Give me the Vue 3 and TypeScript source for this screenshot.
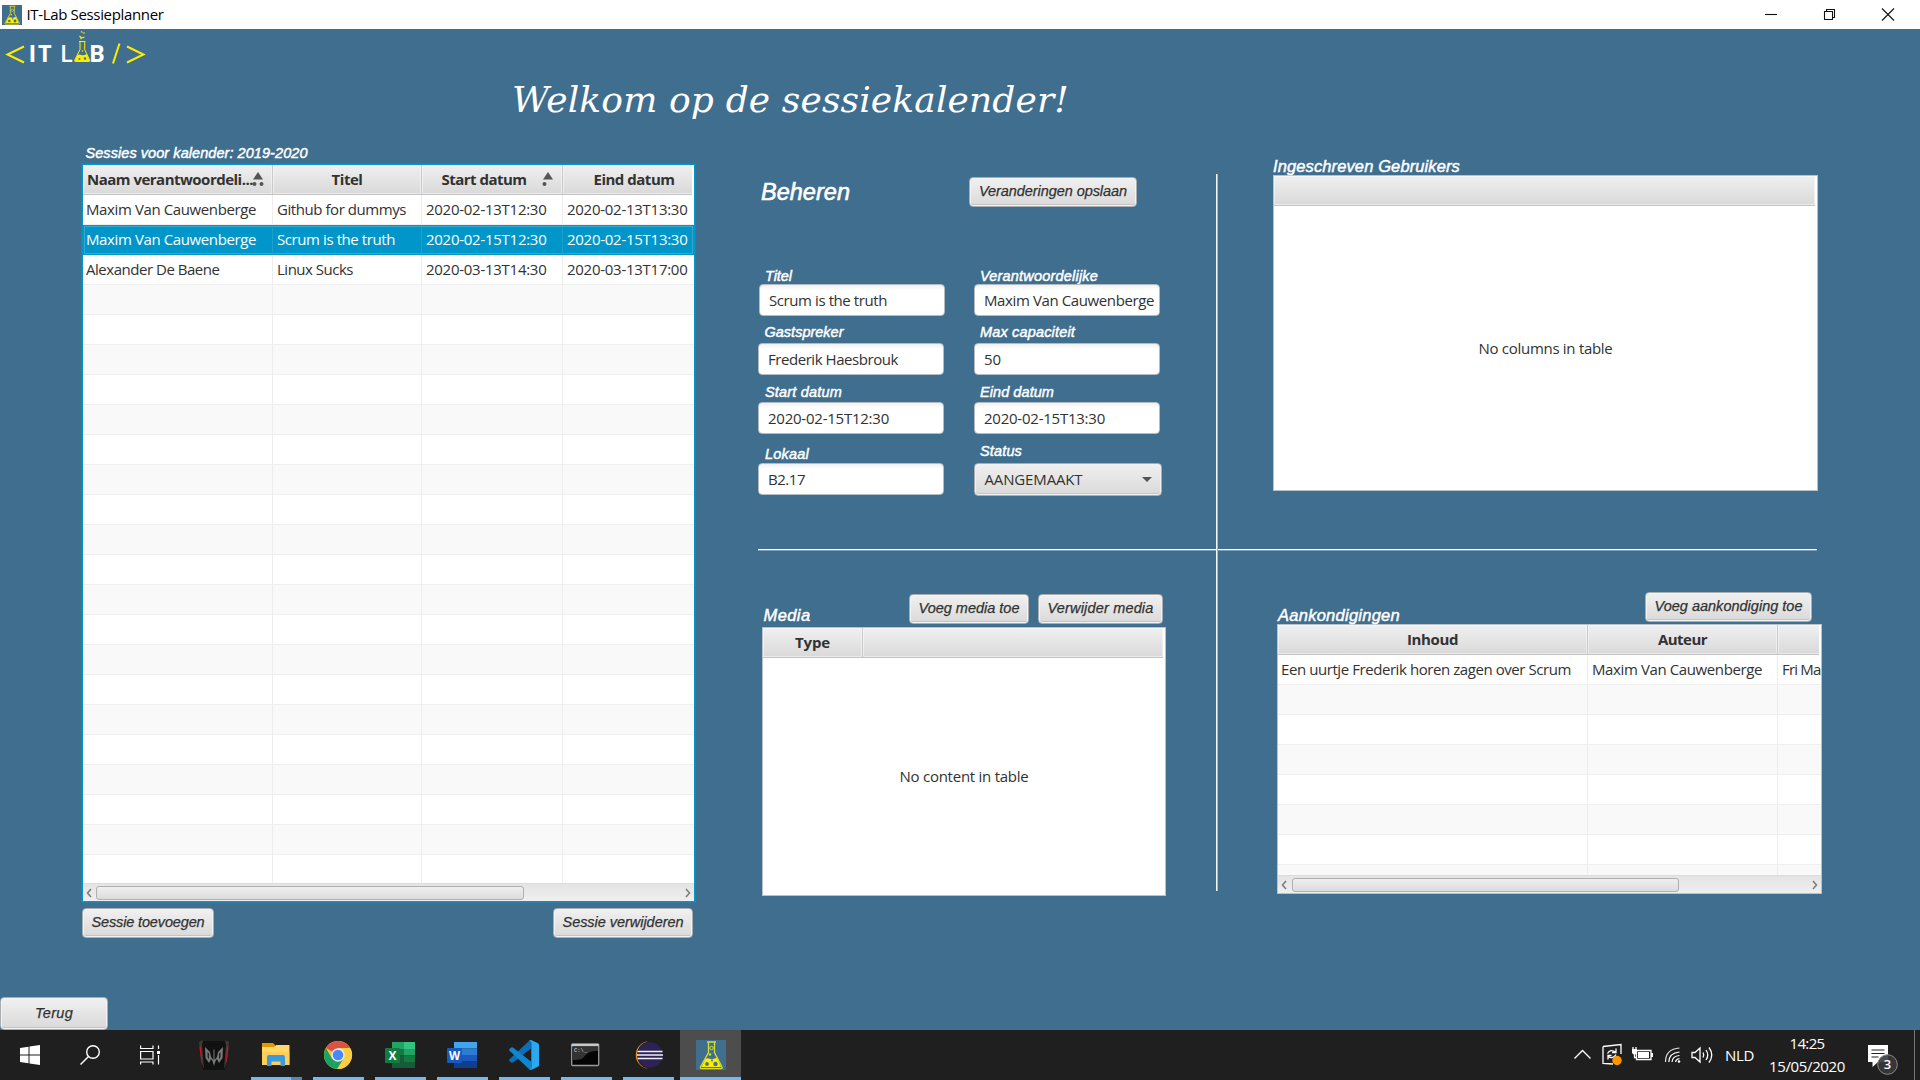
<script setup lang="ts">
import type { Directive } from 'vue'

interface Cell { text: string; width: number }
interface Column { title: string; width: number; titleWidth: number; sort?: number; shift?: number }

// Tracks a run of text out (or in) to the given advance width.
const vFit: Directive<HTMLElement, number> = {
  mounted(el, { value }) {
    const count = (el.textContent ?? '').length
    if (count < 2) return
    const natural = el.getBoundingClientRect().width
    el.style.letterSpacing = `${((value - natural) / count).toFixed(3)}px`
  },
}

const sessionColumns: Column[] = [
  { title: 'Naam verantwoordeli...', width: 190, titleWidth: 166, sort: 2, shift: -7.5 },
  { title: 'Titel', width: 149, titleWidth: 31 },
  { title: 'Start datum', width: 141, titleWidth: 85, sort: 1, shift: -8 },
  { title: 'Eind datum', width: 132, titleWidth: 81, shift: 5 },
]
const sessions: Cell[][] = [
  [{ text: 'Maxim Van Cauwenberge', width: 170 }, { text: 'Github for dummys', width: 129 }, { text: '2020-02-13T12:30', width: 120.5 }, { text: '2020-02-13T13:30', width: 120.5 }],
  [{ text: 'Maxim Van Cauwenberge', width: 170 }, { text: 'Scrum is the truth', width: 118 }, { text: '2020-02-15T12:30', width: 120.5 }, { text: '2020-02-15T13:30', width: 120.5 }],
  [{ text: 'Alexander De Baene', width: 133.5 }, { text: 'Linux Sucks', width: 76 }, { text: '2020-03-13T14:30', width: 120.5 }, { text: '2020-03-13T17:00', width: 120.5 }],
]
const emptySessionRows = 20

const noticeColumns: Column[] = [
  { title: 'Inhoud', width: 310, titleWidth: 51 },
  { title: 'Auteur', width: 190, titleWidth: 49 },
  { title: '', width: 43, titleWidth: 0 },
]
const notice: Cell[] = [
  { text: 'Een uurtje Frederik horen zagen over Scrum', width: 290 },
  { text: 'Maxim Van Cauwenberge', width: 170 },
  { text: 'Fri Ma', width: 38.5 },
]

const tasks = ['predator', 'explorer', 'chrome', 'excel', 'word', 'vscode', 'cmd', 'eclipse', 'lab']
</script>

<template>
  <div class="screen">
    <svg class="defs" width="0" height="0">
      <defs>
        <symbol id="flask" viewBox="0 0 30 30">
          <rect width="30" height="30" fill="#406e8f" />
          <path d="M11 2h9M12.500 2.500v10L4.500 27c-.4 1 .2 1.700 1 1.700h19.500c1 0 1.500-.8 1-1.700L18.500 12.500v-10" fill="none" stroke="#d2df35" stroke-width="1.300" />
          <path d="M9.500 19c3-2 5 1 7.500 0s3-1 4-1l4 9H5.500z" fill="#ffed00" />
          <circle cx="15.500" cy="8" r="1.700" fill="none" stroke="#d2df35" /><circle cx="14" cy="14.500" r="1.200" fill="#d2df35" />
          <circle cx="11" cy="24" r="1.900" fill="#4c7481" /><circle cx="19.500" cy="24" r="2.200" fill="#4c7481" /><circle cx="16" cy="20.500" r="1" fill="#4c7481" />
        </symbol>
      </defs>
    </svg>

    <header class="titlebar">
      <svg class="app-icon" width="20" height="20"><use href="#flask" /></svg>
      <span v-fit="137" class="t">IT-Lab Sessieplanner</span>
      <svg class="window-buttons" width="174" height="29" viewBox="0 0 174 29" fill="none" stroke="#111" stroke-width="1.100">
        <path d="M19 14.500h12" />
        <path d="M78.500 11.500h8v8h-8zM80.500 11.500v-2h8v8h-2" />
        <path d="M136 8.500l12 12M148 8.500l-12 12" />
      </svg>
    </header>

    <main class="app">
      <svg class="logo" width="150" height="40" viewBox="0 29 150 40">
        <g fill="none" stroke="#ffed00" stroke-width="2">
          <path d="M24 46.500L7.500 54.500L24 62.500M127 46.500l16.500 8-16.500 8M119.500 43.500L113 63.500" />
          <path d="M79 41.500h6.500M80 42v7.500L74.800 60q-.5 1.500 1 1.500h13q1.500 0 .8-1.500L84.700 49.500V42" stroke-width="1" />
          <path d="M81 31.500l1.500 1M83.500 33.500l1-1M79.500 36l2 2 3-1M80.500 39l1-.5" stroke-width="1.200" />
        </g>
        <path d="M77.500 55q2-1 4 0t5-1l3.500 7.500H74.500z" fill="#ffed00" />
        <circle cx="79.500" cy="59" r="1" fill="#406e8f" /><circle cx="85" cy="58.500" r="1.200" fill="#406e8f" />
        <circle cx="82.500" cy="51" r=".8" fill="#ffed00" />
        <g fill="#fff" font-family="Open Sans, sans-serif" font-weight="700" font-size="23.500">
          <text x="28.500" y="62" textLength="23">IT</text><text x="60" y="62" font-weight="600">L</text><text x="89" y="62">B</text>
        </g>
      </svg>
      <h1><span v-fit="557" class="t">Welkom op de sessiekalender!</span></h1>

      <div class="content">
        <section class="sessions">
          <div class="label caption"><span v-fit="222" class="t">Sessies voor kalender: 2019-2020</span></div>
          <div class="table focused">
            <div class="thead">
              <div v-for="c in sessionColumns" :key="c.title" class="th" :style="{ width: c.width + 'px' }">
                <span v-fit="c.titleWidth" class="t" :style="{ marginLeft: (c.shift ?? 0) * 2 + 'px' }">{{ c.title }}</span>
                <svg v-if="c.sort" class="sort" width="12" height="14" viewBox="0 0 12 14" fill="#555">
                  <path d="M6 0l5 7.500H1z" /><circle cx="2.500" cy="12" r="2" /><circle v-if="c.sort === 2" cx="9.500" cy="12" r="2" />
                </svg>
              </div>
            </div>
            <div class="tbody">
              <div v-for="(row, i) in sessions" :key="i" class="tr" :class="{ selected: i === 1 }">
                <div v-for="(cell, j) in row" :key="j" class="td" :style="{ width: sessionColumns[j].width + 'px' }">
                  <span v-fit="cell.width" class="t">{{ cell.text }}</span>
                </div>
              </div>
              <div v-for="n in emptySessionRows" :key="'e' + n" class="tr" :class="{ odd: n % 2 === 1 }">
                <div v-for="c in sessionColumns" :key="c.title" class="td" :style="{ width: c.width + 'px' }"></div>
              </div>
            </div>
            <div class="scrollbar">
              <svg width="6" height="10" viewBox="0 0 6 10"><path d="M5 1L1.500 5L5 9" /></svg>
              <div class="track"><div class="thumb wide"></div></div>
              <svg width="6" height="10" viewBox="0 0 6 10"><path d="M1 1L4.500 5L1 9" /></svg>
            </div>
          </div>
          <div class="actions">
            <button class="btn add"><span v-fit="113" class="t">Sessie toevoegen</span></button>
            <button class="btn remove"><span v-fit="121" class="t">Sessie verwijderen</span></button>
          </div>
        </section>

        <section class="details">
          <div class="upper">
            <div class="manage">
              <div class="manage-head">
                <h2><span v-fit="89" class="t">Beheren</span></h2>
                <button class="btn save"><span v-fit="148" class="t">Veranderingen opslaan</span></button>
              </div>
              <div class="form">
                <div class="col first">
                  <div class="label l1"><span v-fit="27" class="t">Titel</span></div>
                  <div class="field nudged"><span v-fit="118" class="t">Scrum is the truth</span></div>
                  <div class="label l2 back"><span v-fit="79" class="t">Gastspreker</span></div>
                  <div class="field"><span v-fit="130" class="t">Frederik Haesbrouk</span></div>
                  <div class="label l3"><span v-fit="77" class="t">Start datum</span></div>
                  <div class="field"><span v-fit="121" class="t">2020-02-15T12:30</span></div>
                  <div class="label l4"><span v-fit="44" class="t">Lokaal</span></div>
                  <div class="field"><span v-fit="37" class="t">B2.17</span></div>
                </div>
                <div class="col second">
                  <div class="label l1"><span v-fit="118" class="t">Verantwoordelijke</span></div>
                  <div class="field"><span v-fit="170" class="t">Maxim Van Cauwenberge</span></div>
                  <div class="label l2"><span v-fit="95" class="t">Max capaciteit</span></div>
                  <div class="field"><span v-fit="17" class="t">50</span></div>
                  <div class="label l3"><span v-fit="74" class="t">Eind datum</span></div>
                  <div class="field"><span v-fit="121" class="t">2020-02-15T13:30</span></div>
                  <div class="label l4 status"><span v-fit="42" class="t">Status</span></div>
                  <div class="combo">
                    <span v-fit="98" class="t">AANGEMAAKT</span>
                    <svg width="10" height="5" viewBox="0 0 10 5"><path d="M0 0h10L5 5z" fill="#555" /></svg>
                  </div>
                </div>
              </div>
            </div>
            <div class="users">
              <div class="label heading"><span v-fit="187" class="t">Ingeschreven Gebruikers</span></div>
              <div class="table plain">
                <div class="thead"><div class="th filler"></div></div>
                <div class="placeholder"><span v-fit="134" class="t">No columns in table</span></div>
              </div>
            </div>
          </div>
          <div class="rule"></div>
          <div class="lower">
            <div class="media">
              <div class="bar">
                <div class="label heading"><span v-fit="47" class="t">Media</span></div>
                <button class="btn m1"><span v-fit="101" class="t">Voeg media toe</span></button>
                <button class="btn m2"><span v-fit="106" class="t">Verwijder media</span></button>
              </div>
              <div class="table plain">
                <div class="thead">
                  <div class="th type"><span v-fit="35" class="t">Type</span></div>
                  <div class="th filler"></div>
                </div>
                <div class="placeholder"><span v-fit="129" class="t">No content in table</span></div>
              </div>
            </div>
            <div class="notices">
              <div class="bar">
                <div class="label heading"><span v-fit="122" class="t">Aankondigingen</span></div>
                <button class="btn n1"><span v-fit="148" class="t">Voeg aankondiging toe</span></button>
              </div>
              <div class="table">
                <div class="thead">
                  <div v-for="c in noticeColumns" :key="c.title" class="th" :style="{ width: c.width + 'px' }">
                    <span v-fit="c.titleWidth" class="t">{{ c.title }}</span>
                  </div>
                </div>
                <div class="tbody">
                  <div class="tr">
                    <div v-for="(cell, j) in notice" :key="j" class="td" :style="{ width: noticeColumns[j].width + 'px' }">
                      <span v-fit="cell.width" class="t">{{ cell.text }}</span>
                    </div>
                  </div>
                  <div v-for="n in 7" :key="n" class="tr" :class="{ odd: n % 2 === 1 }">
                    <div v-for="c in noticeColumns" :key="c.title" class="td" :style="{ width: c.width + 'px' }"></div>
                  </div>
                </div>
                <div class="scrollbar">
                  <svg width="6" height="10" viewBox="0 0 6 10"><path d="M5 1L1.500 5L5 9" /></svg>
                  <div class="track"><div class="thumb"></div></div>
                  <svg width="6" height="10" viewBox="0 0 6 10"><path d="M1 1L4.500 5L1 9" /></svg>
                </div>
              </div>
            </div>
          </div>
        </section>
      </div>

      <button class="btn back-btn"><span v-fit="38" class="t">Terug</span></button>
    </main>

    <footer class="taskbar">
      <div class="sys">
        <svg width="20" height="20" viewBox="0 0 20 20" fill="#fff"><path d="M0 3l8.500-1.200v7.700H0zM9.500 1.600L20 0v9.500H9.500zM0 10.500h8.500v7.800L0 17zM9.500 10.500H20V20L9.500 18.500z" /></svg>
      </div>
      <div class="sys">
        <svg width="20" height="20" viewBox="0 0 20 20" fill="none" stroke="#fff" stroke-width="1.400"><circle cx="13" cy="7" r="6.300" /><path d="M8.500 11.500L.5 19.500" /></svg>
      </div>
      <div class="sys">
        <svg width="20" height="20" viewBox="0 0 20 20" fill="none" stroke="#fff" stroke-width="1.200"><path d="M.6.500V3.500H13V.5M.6 6.500H13V14H.6zM.6 19.500V17H13v2.500M18.500 .5V4M18.500 10v9.500" /><path d="M17 6h3v3h-3z" fill="#fff" stroke="none" /></svg>
      </div>
      <div class="tasks">
        <div v-for="t in tasks" :key="t" class="task" :class="t">
          <svg width="30" height="30" viewBox="0 0 30 30">
            <g v-if="t === 'predator'">
              <path d="M4 1h22l2 10-2 19H4L1 11z" fill="#111" />
              <path d="M0 2l4-2-1 5 2 24-3-8zM30 2l-4-2 1 5-2 24 3-8z" fill="#3b3b3b" />
              <path d="M.5 6l1 10 2 10-1.500-19zM29.500 6l-1 10-2 10 1.500-19z" fill="#d0121b" />
              <path d="M6 7l5 5 1 5 2.500 3V10l.5-1 .5 1v10l2.500-3 1-5 5-5-.5 11-3.500 5-2-4-1.500 2-1.500 5-1.500-5-1.500-2-2 4-3.500-5z" fill="#77797b" />
              <path d="M8.500 12l1.500 1.500v6L8.500 17zM21.500 12L20 13.500v6l1.500-2.500z" fill="#222" />
            </g>
            <g v-else-if="t === 'explorer'">
              <path d="M1 3h11l2 2v4H1z" fill="#e09a00" /><path d="M1 7h12l2-2h13q.5 0 .5.500V25H1z" fill="#ffd76a" /><path d="M1 12h27.500v13H1z" fill="#fdc945" opacity=".55" />
              <path d="M6 26V17q0-2 2-2h14q2 0 2 2v9h-4.500v-4.500h-9V26z" fill="#3b99e0" />
            </g>
            <g v-else-if="t === 'chrome'">
              <circle cx="15" cy="15" r="14" fill="#fbc73b" />
              <path d="M15 15L2.900 8A14 14 0 0 1 27.100 8H15z" fill="#dd5144" /><path d="M2.900 8A14 14 0 0 0 15 29l6.100-10.500L15 15 9 18.500z" fill="#1ba261" />
              <path d="M27.100 8A14 14 0 0 1 14 29l7-11L15 8z" fill="#ffcd43" />
              <circle cx="15" cy="15" r="6.700" fill="#e6eefb" /><circle cx="15" cy="15" r="5.300" fill="#4a89f5" />
            </g>
            <g v-else-if="t === 'excel'">
              <path d="M7 2h12v7H7z" fill="#21a366" /><path d="M19 2h11v7H19z" fill="#33c481" /><path d="M7 9h12v6.500H7z" fill="#107c41" /><path d="M19 9h11v6.500H19z" fill="#21a366" />
              <path d="M7 15.500h23V28H7z" fill="#185c37" /><path d="M19 15.500h11V22H19z" fill="#107c41" /><rect y="8" width="15" height="15" rx="1" fill="#107c41" />
              <text x="7.500" y="19.700" text-anchor="middle" fill="#fff" font-family="Open Sans, sans-serif" font-weight="700" font-size="12">X</text>
            </g>
            <g v-else-if="t === 'word'">
              <path d="M7 2h23v6.500H7z" fill="#41a5ee" /><path d="M7 8.500h23V15H7z" fill="#2b7cd3" /><path d="M7 15h23v6.500H7z" fill="#185abd" /><path d="M7 21.500h23V28H7z" fill="#103f91" />
              <rect y="8" width="15" height="15" rx="1" fill="#185abd" />
              <text x="7.500" y="19.700" text-anchor="middle" fill="#fff" font-family="Open Sans, sans-serif" font-weight="700" font-size="11.500">W</text>
            </g>
            <g v-else-if="t === 'vscode'">
              <path d="M22 0v8.500L4 22.500q-1 .7-1.800 0L.5 21q-.9-1 0-1.800L20 1z" fill="#0a6fb8" />
              <path d="M22 30v-8.500L4 7.500q-1-.7-1.800 0L.5 9q-.9 1 0 1.800L20 29z" fill="#0f86cf" />
              <path d="M22 0l7 3.300q1 .6 1 1.700v20q0 1.200-1 1.700L22 30q-1.500 0-2-1 2 1 2.300-1V2.500Q22 .5 20 1q.7-1 2-1z" fill="#2aa8f2" />
            </g>
            <g v-else-if="t === 'cmd'">
              <rect x=".7" y="4" width="27" height="21.500" rx="1" fill="#050505" stroke="#9a9a9a" stroke-width="1.300" /><path d="M.7 4h27v2.300h-27z" fill="#c8c8c8" />
              <path d="M1.500 7h25.500v4q-10-1-15 7-3 2-10.500 2z" fill="#333" /><text x="3" y="11.800" fill="#ddd" font-family="Liberation Mono, monospace" font-size="5.500">C:\_</text>
            </g>
            <g v-else-if="t === 'eclipse'">
              <path d="M15 1.200A13.900 13.900 0 0 0 15 28.800Q4 26 4 15T15 1.200z" fill="#f7941e" /><circle cx="17" cy="15" r="12.700" fill="#2c2255" />
              <path d="M4.500 11.500h25M4 15h26M4.500 18.500h25" stroke="#f0eff6" stroke-width="1.700" />
            </g>
            <use v-else href="#flask" />
          </svg>
          <i v-if="t !== 'predator'"></i>
        </div>
      </div>
      <div class="tray">
        <svg width="146" height="30" viewBox="0 0 146 30" fill="none" stroke="#fff" stroke-width="1.300">
          <path d="M4.500 18.500L12.500 10.500L20.500 18.500" />
          <path d="M33 6.500L51 4.500V14M33 6.500V23.500L43 24" />
          <path d="M37.500 13.500q3-5 8-1.500M46 8.500v4h-4M46 14.500q-3 5-8 2M38 19.500v-4h3.500" />
          <circle cx="47" cy="20.500" r="4.700" fill="#ff9800" stroke="none" />
          <path d="M66.500 10.500h14.500v9H66.500z" /><path d="M68 12h11v6H68zM81 13h2v4h-2zM62 9h5v4q-2.500 3-5 0z" fill="#fff" stroke="none" /><path d="M63 7v3M66 7v3M64.500 13v4.500h2" />
          <g stroke-width="1.200"><path d="M95.500 22Q95.500 9 109.500 8" opacity=".85" /><path d="M98.800 22Q99 13 109.500 12M102 22q.5-6 7.500-6.500M105.500 22q.5-3 4-3.500" /></g><circle cx="109" cy="21.500" r="1.300" fill="#fff" stroke="none" />
          <path d="M122 12.500h3l5-4.500v14l-5-4.500h-3zM133 12.500q1.500 2.500 0 5M136 10q3.500 5 0 10M139 7.500q5.500 7.500 0 15" />
        </svg>
        <span v-fit="29" class="t lang">NLD</span>
        <div class="clock"><span v-fit="35" class="t">14:25</span><span v-fit="76" class="t">15/05/2020</span></div>
        <svg class="notify" width="36" height="34" viewBox="0 0 36 34">
          <path d="M3 3h20v17H13l-5.500 5v-5H3z" fill="#fff" /><path d="M6.500 8h13M6.500 11.500h13M6.500 15h7" stroke="#222" stroke-width="1.200" />
          <circle cx="22.500" cy="22.500" r="9.800" fill="#383838" fill-opacity=".9" stroke="#8b8b8b" />
          <text x="22.500" y="27" text-anchor="middle" fill="#fff" font-family="Open Sans, sans-serif" font-size="13" font-weight="600">3</text>
        </svg>
      </div>
    </footer>
  </div>
</template>

<style>
body { margin: 0; overflow: hidden; }
</style>

<style scoped>
.screen { width: 1920px; height: 1080px; display: flex; flex-direction: column; overflow: hidden; position: relative; font: 15px/20px "Open Sans", "Noto Sans", sans-serif; color: #323232; background: #406e8f; }
.screen * { box-sizing: border-box; }
.defs { position: absolute; }
.t { display: inline-block; white-space: pre; flex: none; }
svg { flex: none; display: block; }

.titlebar { height: 29px; background: #fff; display: flex; align-items: center; padding-left: 2px; color: #000; flex: none; }
.app-icon { margin-right: 4.500px; }
.titlebar .t { line-height: 29px; height: 29px; }
.window-buttons { margin-left: auto; }

.app { height: 1001px; flex: none; display: flex; flex-direction: column; align-items: flex-start; }
.logo { flex: none; }
h1 { margin: 0 0 0 512px; font: italic 400 36px/61px "DejaVu Serif", serif; color: #fff; height: 60px; }
.content { display: flex; height: 868px; width: 1920px; padding-left: 82px; }

.label { color: #fff; font: italic 400 14.500px/18px "Liberation Sans", sans-serif; -webkit-text-stroke: .45px currentColor; height: 18px; white-space: nowrap; }
.heading { font-size: 16.500px; }
.btn { font: italic 400 14.500px/20px "Liberation Sans", sans-serif; -webkit-text-stroke: .25px #323232; color: #323232; height: 30px; padding: 0 0 2px; border: 1px solid #a9adb0; border-radius: 4px; background: linear-gradient(#f1f1f1, #d9d9d9); box-shadow: inset 0 0 0 1px #f3f3f3, inset 0 -2px 0 #c4c4c4; display: flex; align-items: center; justify-content: center; flex: none; }

.sessions { width: 613px; padding-top: 15px; }
.caption { margin-left: 3.500px; height: 20px; line-height: 18px; }
.table { border: 1px solid #b9c2c8; background: #fff; display: flex; flex-direction: column; overflow: hidden; }
.focused { border: 1px solid #0096c9; height: 738px; box-shadow: 0 0 0 1px rgba(3, 158, 211, .35); }
.thead { display: flex; height: 30px; border-bottom: 1px solid #c4c4c4; background: linear-gradient(#f0f0f0, #d9d9d9); flex: none; margin-right: 2px; overflow: hidden; }
.th { font-weight: 700; display: flex; align-items: center; justify-content: center; border-right: 1px solid #cacaca; box-shadow: inset 0 0 0 1px rgba(255, 255, 255, .45); flex: none; position: relative; line-height: 26px; padding-bottom: 1px; }
.th:last-child { border-right: 0; }
.sort { position: absolute; right: 8px; top: 7px; }
.tbody { flex: 1; min-height: 0; overflow: hidden; }
.tr { display: flex; height: 30px; border-bottom: 1px solid #efefef; }
.tr.odd { background: #f9f9f9; }
.td { border-right: 1px solid #ededed; padding-left: 3px; line-height: 29px; flex: none; white-space: nowrap; }
.td:last-child { border-right: 0; }
.td + .td { padding-left: 4px; }
.tr.selected { background: #0096c9; color: #fff; border-bottom: 0; box-shadow: inset 0 0 0 1px #0096c9, inset 0 0 0 2px #34a9d1; }
.tr.selected .td { border-color: #1f9fcb; }
.scrollbar { height: 18px; flex: none; border-top: 1px solid #dcdcdc; background: linear-gradient(#e4e4e4, #efefef); display: flex; align-items: center; padding: 0 3px; gap: 5px; }
.scrollbar path { fill: none; stroke: #7a7a7a; stroke-width: 1.500; }
.track { flex: 1; }
.thumb { height: 14px; width: 387px; border: 1px solid #b0b0b0; border-radius: 3px; background: linear-gradient(#efefef, #dcdcdc); }
.thumb.wide { width: 428px; margin-left: -1px; }
.actions { display: flex; justify-content: space-between; margin-top: 6px; padding-right: 2px; }
.add { width: 132px; }
.remove { width: 140px; }

.details { margin-left: 63px; width: 1064px; position: relative; }
.details::after { content: ""; position: absolute; left: 458px; top: 45px; width: 2px; height: 717px; background: linear-gradient(90deg, #f4f6f8 50%, #a4b9c8 50%); }
.upper { display: flex; height: 420px; }
.rule { height: 2px; width: 1059px; background: linear-gradient(#fff 50%, #7f9db4 50%); }
.manage { width: 408px; }
.manage-head { display: flex; padding-top: 49px; height: 141px; justify-content: space-between; padding-right: 29px; }
h2 { margin: -3px 0 0 3px; color: #fff; font: italic 400 23.500px/34px "Liberation Sans", sans-serif; -webkit-text-stroke: .6px #fff; }
.save { width: 168px; margin-top: -1px; }
.form { display: flex; }
.col { display: flex; flex-direction: column; }
.second { margin-left: 30px; }
.first .label { padding-left: 7px; }
.first .label.back { padding-left: 6.500px; }
.second .label { padding-left: 6px; }
.l1 { height: 14px; line-height: 13px; }
.l2 { height: 27px; line-height: 33px; }
.l3 { height: 27px; line-height: 35px; }
.l4 { height: 29px; line-height: 41px; }
.l4.status { line-height: 34px; }
.field { width: 186px; height: 32px; border: 1px solid #b3bcc2; border-radius: 4px; background: linear-gradient(#f0f0f0, #fff 5px); padding-left: 9px; line-height: 30px; white-space: nowrap; }
.field.nudged { position: relative; left: 1px; }
.combo { width: 188px; height: 33px; border: 1px solid #a9adb0; border-radius: 4px; background: linear-gradient(#f0f0f0, #d9d9d9); box-shadow: inset 0 0 0 1px #f0f0f0, inset 0 -2px 0 #c8c8c8; display: flex; align-items: center; justify-content: space-between; padding: 0 9px 0 9.500px; line-height: 31px; }
.users { margin-left: 107px; width: 545px; padding-top: 28px; }
.users .heading { height: 19px; line-height: 19px; }
.users .table { height: 316px; margin-top: -1px; }
.filler { flex: 1; }
.placeholder { flex: 1; display: flex; align-items: center; justify-content: center; padding-bottom: 1px; }

.lower { display: flex; padding-top: 40px; }
.media { margin-left: 4px; width: 404px; }
.bar { display: flex; align-items: flex-start; }
.bar .heading { margin-left: 1px; padding-top: 14px; }
.media .bar { height: 36px; padding-top: 3px; padding-bottom: 0; }
.media .bar .heading { padding-top: 12px; width: 146px; margin-left: 1.500px; margin-right: -.5px; }
.m1 { width: 120px; }
.m2 { width: 125px; margin-left: 9px; }
.media .table { height: 269px; }
.type { width: 100px; }
.notices { margin-left: 111px; width: 545px; }
.notices .bar { height: 33px; justify-content: space-between; padding: 1px 10px 0 0; }
.n1 { width: 167px; }
.notices .table { height: 270px; }

.back-btn { width: 108px; height: 33px; margin-top: 0; }

.taskbar { height: 50px; flex: none; background: #1f1f1f; display: flex; color: #fff; }
.sys { width: 60px; display: flex; align-items: center; justify-content: center; }
.tasks { display: flex; margin-left: 3px; }
.task { width: 62px; display: flex; flex-direction: column; align-items: center; padding-top: 10px; justify-content: space-between; }
.task i { height: 3px; width: 51px; background: #76b9ed; }
.task.explorer i { background: linear-gradient(90deg, #76b9ed 40px, #5689b0 40px); }
.task.lab { background: #4d4d4d; width: 61px; margin-left: 1px; }
.task.lab i { width: 100%; }
.task.predator { justify-content: flex-start; }
.tray { margin-left: auto; display: flex; width: 350px; padding-right: 5px; }
.tray > svg:first-child { margin-top: 10px; margin-left: 0; }
.lang { line-height: 50px; margin-left: 9px; }
.clock { width: 78px; margin-left: 14px; display: flex; flex-direction: column; align-items: center; padding-top: 2px; }
.clock .t { line-height: 23px; }
.notify { margin: 12px 0 0 19px; }
.tray::after { content: ""; width: 1px; margin-left: auto; background: #777; }
</style>
